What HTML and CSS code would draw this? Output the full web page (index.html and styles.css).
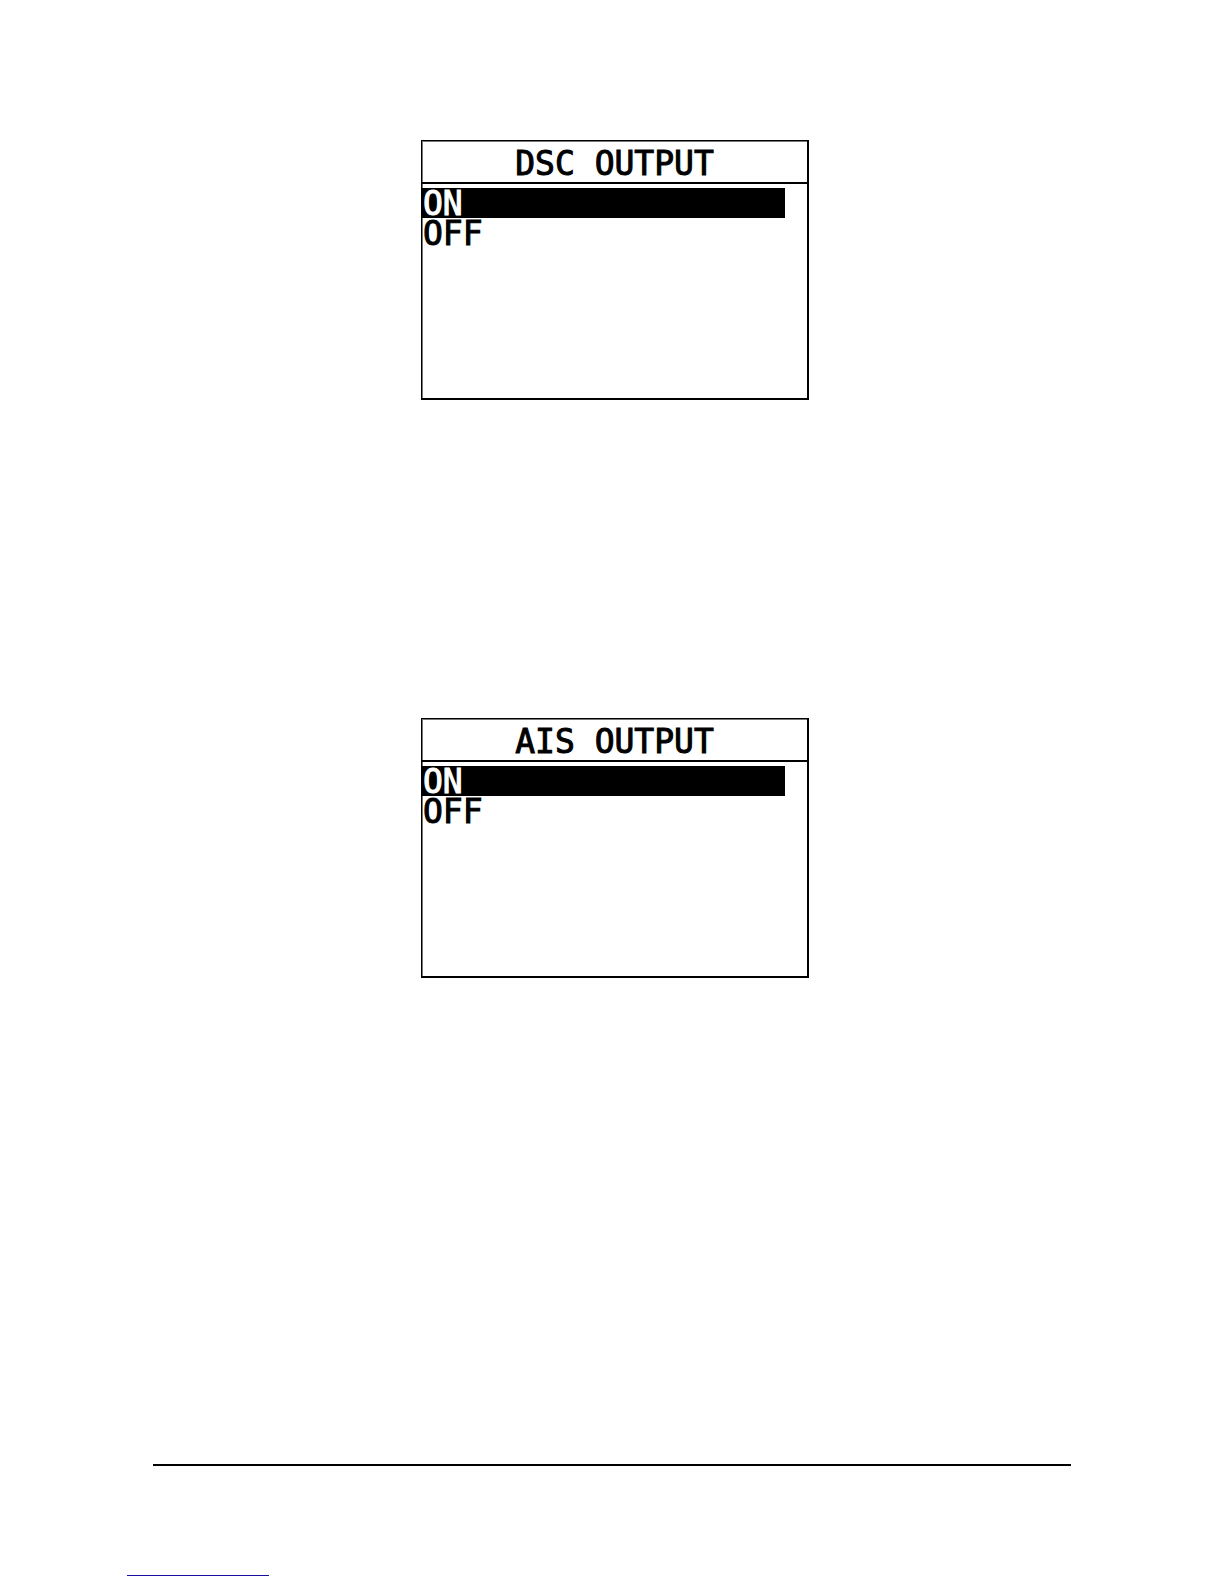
FILE: index.html
```html
<!DOCTYPE html>
<html lang="en">
<head>
<meta charset="utf-8">
<meta name="viewport" content="width=device-width, initial-scale=1">
<title>Output settings</title>
<link rel="stylesheet" href="styles.css">
</head>
<body>
<main class="screens">
  <section class="screen">
    <h2 class="screen-title">DSC OUTPUT</h2>
    <ul class="options">
      <li><button class="option selected" type="button">ON</button></li>
      <li><button class="option" type="button">OFF</button></li>
    </ul>
  </section>
  <section class="screen">
    <h2 class="screen-title">AIS OUTPUT</h2>
    <ul class="options">
      <li><button class="option selected" type="button">ON</button></li>
      <li><button class="option" type="button">OFF</button></li>
    </ul>
  </section>
</main>
<footer class="footer">
  <hr class="rule">
  <a class="footer-link" href="#" aria-label="Link"></a>
</footer>
</body>
</html>
```
FILE: styles.css
```css
* {
  box-sizing: border-box;
}

body {
  margin: 0;
  background: #fff;
  color: #000;
  font-family: "DejaVu Sans Mono", monospace;
}

.screens {
  display: flex;
  flex-direction: column;
  align-items: center;
  gap: 318px;
  padding: 140px 0 0 6px;
}

.screen {
  width: 388px;
  max-width: 100%;
  min-height: 260px;
  border: 1px solid #000;
  border-right-width: 2px;
  border-bottom-width: 2px;
  box-shadow: inset 1px 1px 0 #777;
}

.screen-title,
.option {
  font-size: 33px;
  font-weight: 400;
  -webkit-text-stroke: 1px currentColor;
}

.screen-title {
  margin: 0;
  padding-top: 4px;
  border-bottom: 2px solid #000;
  line-height: 37px;
  text-align: center;
}

.options {
  margin: 0;
  padding: 4px 22px 0 0;
  list-style: none;
}

.option {
  display: block;
  width: 100%;
  padding: 2px 0 0 1px;
  border: 0;
  background: none;
  color: #000;
  font-family: inherit;
  line-height: 28px;
  text-align: left;
}

.selected {
  background: #000;
  color: #fff;
}

.footer {
  padding-top: 486px;
}

.rule {
  height: 2px;
  margin: 0 153px;
  border: 0;
  background: #000;
}

.footer-link {
  display: block;
  width: 142px;
  height: 110px;
  margin: 0 0 8px 127px;
  border-bottom: 1px solid #1a0f9c;
}
```
